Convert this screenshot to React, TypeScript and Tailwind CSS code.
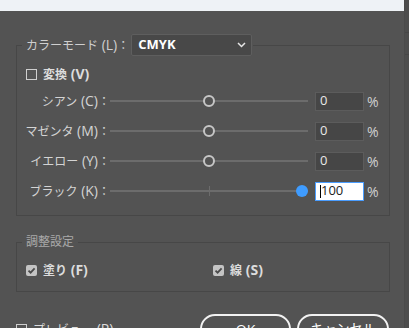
const font = "font-['Open_Sans','Noto_Sans_CJK_JP',sans-serif]";

function Key({ k }: { k: string }) {
  return <span className="text-[14px] leading-[16px]"> ({k})</span>;
}

function Box({ checked }: { checked?: boolean }) {
  if (checked) {
    return (
      <span className="flex h-[11px] w-[11px] items-center justify-center rounded-[2px] bg-[#c4c4c4]">
        <svg width="9" height="9" viewBox="0 0 9 9">
          <path d="M1.5 4.6 L3.6 6.7 L7.6 2.3" fill="none" stroke="#4a4a4a" strokeWidth="1.8" />
        </svg>
      </span>
    );
  }
  return <span className="h-[11px] w-[11px] border border-[#cfcfcf]" />;
}

function Slider({ label, k, pos, value, active }: { label: string; k: string; pos: number; value: string; active?: boolean }) {
  return (
    <div className="flex h-[20px] items-center">
      <span className="w-[93px] text-right text-[12px] leading-[16px] text-[#d4d4d4]">
        {label}
        <Key k={k} />：
      </span>
      <div className="relative h-[2px] w-[198px] bg-[#6c6c6c]">
        {active && <span className="absolute left-[99px] top-[-4px] h-[10px] w-[1px] bg-[#6c6c6c]" />}
        <span
          className={
            active
              ? "absolute top-[-5px] h-[12px] w-[12px] rounded-full bg-[#3f9cff]"
              : "absolute top-[-5px] h-[12px] w-[12px] rounded-full border-2 border-[#c6c6c6] bg-[#535353]"
          }
          style={{ left: `calc(${pos} * (100% - 12px))` }}
        />
      </div>
      <div
        className={
          active
            ? "ml-[7px] flex h-[19px] w-[49px] items-center border border-[#4a9dff] bg-white pl-[4px] text-[13px] text-[#222]"
            : "ml-[7px] flex h-[19px] w-[49px] items-center border border-[#5c5c5c] bg-[#464646] pl-[4px] text-[13px] text-[#e8e8e8]"
        }
      >
        {active && <span className="h-[13px] w-[1px] bg-black" />}
        {value}
      </div>
      <span className="ml-[3px] text-[14px] text-[#d0d0d0]">%</span>
    </div>
  );
}

export default function App() {
  return (
    <div className={`flex h-[328px] w-[409px] overflow-hidden bg-[#535353] ${font}`}>
      <div className="w-[404px]">
        <div className="h-[11px] overflow-hidden bg-[#eef2f6]">
          <div className="mt-[-12px] pl-[8px] text-[12px] leading-[14px] text-[#222]">カラー調整</div>
        </div>

        <fieldset className="ml-[16px] mt-[23px] w-[374px] border border-[#474747] pb-[14px] pt-[8px]">
          <legend className="ml-[5px] flex items-center pl-[4px] pr-[1px]">
            <span className="text-[12px] leading-[16px] text-[#cfcfcf]">
              カラーモード<Key k="L" />：
            </span>
            <div className="ml-[2px] flex h-[22px] w-[121px] items-center justify-between rounded-[2px] border border-[#5e5e5e] bg-[#484848] pl-[6px] pr-[5px]">
              <span className="text-[13px] font-bold text-white">CMYK</span>
              <svg width="9" height="6" viewBox="0 0 9 6">
                <path d="M1 1 L4.5 4.5 L8 1" fill="none" stroke="#e6e6e6" strokeWidth="1.5" />
              </svg>
            </div>
          </legend>
          <div className="flex h-[20px] items-center gap-[6px] pl-[9px]">
            <Box />
            <span className="text-[12px] font-bold leading-[16px] text-[#dcdcdc]">
              変換<Key k="V" />
            </span>
          </div>
          <div className="mt-[7px] flex flex-col gap-[10px]">
            <Slider label="シアン" k="C" pos={0.5} value="0" />
            <Slider label="マゼンタ" k="M" pos={0.5} value="0" />
            <Slider label="イエロー" k="Y" pos={0.5} value="0" />
            <Slider label="ブラック" k="K" pos={1} value="100" active />
          </div>
        </fieldset>

        <fieldset className="ml-[16px] mt-[19px] w-[374px] border border-[#474747] pb-[11px] pt-[11px]">
          <legend className="ml-[5px] px-[4px] text-[12px] leading-[14px] text-[#a9a9a9]">調整設定</legend>
          <div className="flex h-[20px] items-center pl-[9px]">
            <div className="flex w-[187px] items-center gap-[6px]">
              <Box checked />
              <span className="text-[12px] font-bold leading-[16px] text-[#dcdcdc]">
                塗り<Key k="F" />
              </span>
            </div>
            <div className="flex items-center gap-[6px]">
              <Box checked />
              <span className="text-[12px] font-bold leading-[16px] text-[#dcdcdc]">
                線<Key k="S" />
              </span>
            </div>
          </div>
        </fieldset>

        <div className="mt-[22px] flex items-start pl-[16px]">
          <div className="mt-[7px] flex items-center gap-[6px]">
            <Box />
            <span className="text-[12px] leading-[16px] text-[#dcdcdc]">
              プレビュー<Key k="P" />
            </span>
          </div>
          <div className="ml-auto mr-[15px] flex gap-[6px]">
            <button className="flex h-[30px] w-[91px] items-center justify-center rounded-[15px] border-2 border-[#f2f2f2] text-[14px] text-white">
              OK
            </button>
            <button className="flex h-[30px] w-[92px] items-center justify-center rounded-[15px] border-2 border-[#f2f2f2] text-[13px] text-white">
              キャンセル
            </button>
          </div>
        </div>
      </div>
      <div className="flex w-[5px] flex-col border-l border-[#4a4a4a] bg-[#4d4d4d]">
        <div className="h-[33px] border-b border-[#464646]" />
        <div className="h-[22px] border-b border-[#464646]" />
      </div>
    </div>
  );
}
